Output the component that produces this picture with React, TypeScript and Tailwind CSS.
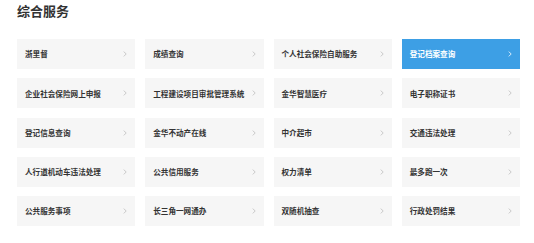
const services = [
  '浙里督',
  '成绩查询',
  '个人社会保险自助服务',
  '登记档案查询',
  '企业社会保险网上申报',
  '工程建设项目审批管理系统',
  '金华智慧医疗',
  '电子职称证书',
  '登记信息查询',
  '金华不动产在线',
  '中介超市',
  '交通违法处理',
  '人行道机动车违法处理',
  '公共信用服务',
  '权力清单',
  '最多跑一次',
  '公共服务事项',
  '长三角一网通办',
  '双随机抽查',
  '行政处罚结果',
];

function Chevron() {
  return (
    <svg width="4" height="6" viewBox="0 0 4 6" fill="none" className="shrink-0">
      <path d="M0.8 0.6L3.2 3L0.8 5.4" stroke="currentColor" strokeWidth="0.8" />
    </svg>
  );
}

export default function App() {
  const active = 3;
  return (
    <div
      className="w-[534px] h-[243px] bg-white pl-[17px] pr-[14px] pt-[2px]"
      style={{ fontFamily: '"Noto Sans CJK SC", "Noto Sans", sans-serif' }}
    >
      <h2 className="text-[13px] leading-[18px] font-bold text-[#333]">综合服务</h2>
      <div className="mt-[19px] grid grid-cols-4 gap-x-[10px] gap-y-[9.3px]">
        {services.map((name, i) => (
          <div
            key={name}
            className={`h-[30px] flex items-center justify-between pl-[8px] pr-[8px] ${
              i === active ? 'bg-[#3d9fe5] text-white' : 'bg-[#f6f6f6] text-[#333]'
            }`}
          >
            <span className="text-[7.6px] font-bold leading-none whitespace-nowrap">{name}</span>
            <span className={i === active ? 'text-white' : 'text-[#bbb]'}>
              <Chevron />
            </span>
          </div>
        ))}
      </div>
    </div>
  );
}
